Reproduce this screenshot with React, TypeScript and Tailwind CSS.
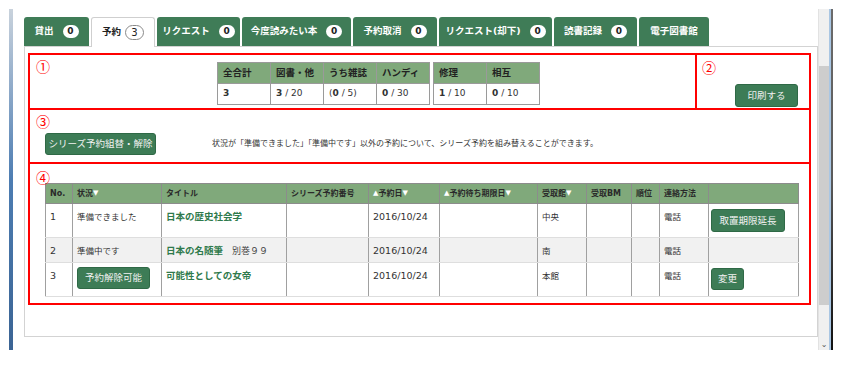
import type { ReactNode } from "react";

type Tab = { label: string; count?: number; w: string; active?: boolean };

const tabs: Tab[] = [
  { label: "貸出", count: 0, w: "w-[65px]" },
  { label: "予約", count: 3, w: "w-[64px]", active: true },
  { label: "リクエスト", count: 0, w: "w-[83px]" },
  { label: "今度読みたい本", count: 0, w: "w-[109px]" },
  { label: "予約取消", count: 0, w: "w-[84px]" },
  { label: "リクエスト(却下)", count: 0, w: "w-[113px]" },
  { label: "読書記録", count: 0, w: "w-[83px]" },
  { label: "電子図書館", w: "w-[70px]" },
];

function GreenButton({ children, className }: { children: ReactNode; className: string }) {
  return (
    <div
      className={`flex items-center justify-center bg-[#3d7c56] border border-[#2f6946] rounded-[3px] text-[#f2f2f2] text-[9.5px] leading-none ${className}`}
    >
      {children}
    </div>
  );
}

function Circled({ children }: { children: ReactNode }) {
  return (
    <div className="font-['Noto_Sans_CJK_JP',sans-serif] text-[#ff0000] text-[14px] leading-[12px] h-[12px]">
      {children}
    </div>
  );
}

function Tri({ up }: { up?: boolean }) {
  return <span className="text-white text-[7px] align-[1px]">{up ? "▲" : "▼"}</span>;
}

// 上段の集計表
function StatTable({ cols }: { cols: { head: string; value: ReactNode }[] }) {
  return (
    <table className="border-collapse table-fixed border border-[#9a9a9a]">
      <tbody>
        <tr className="h-[21px] bg-[#80a97b]">
          {cols.map((c) => (
            <td key={c.head} className="w-[53px] border border-[#9a9a9a] px-[5px] text-[9.5px] font-bold text-[#222]">
              {c.head}
            </td>
          ))}
        </tr>
        <tr className="h-[21px] bg-white">
          {cols.map((c) => (
            <td key={c.head} className="w-[53px] border border-[#9a9a9a] px-[5px] text-[9px] text-[#333]">
              {c.value}
            </td>
          ))}
        </tr>
      </tbody>
    </table>
  );
}

const rows = [
  {
    no: "1",
    status: "準備できました",
    title: "日本の歴史社会学",
    sub: "",
    date: "2016/10/24",
    branch: "中央",
    contact: "電話",
    action: "取置期限延長",
    h: "h-[34px]",
    bg: "bg-white",
  },
  {
    no: "2",
    status: "準備中です",
    title: "日本の名随筆",
    sub: "別巻９９",
    date: "2016/10/24",
    branch: "南",
    contact: "電話",
    action: "",
    h: "h-[25px]",
    bg: "bg-[#f1f1f1]",
  },
  {
    no: "3",
    status: "",
    title: "可能性としての女帝",
    sub: "",
    date: "2016/10/24",
    branch: "本館",
    contact: "電話",
    action: "変更",
    h: "h-[34px]",
    bg: "bg-white",
  },
];

const th = "border border-[#8c8c8c] px-[4px] text-[8px] font-bold text-[#2a2a2a] text-left whitespace-nowrap";
const td = "border-x border-y border-x-[#a0a0a0] border-y-[#dedede] px-[4px] pt-[7px] align-top text-[8.5px] leading-[12px] text-[#333]";

export default function App() {
  return (
    <div className="w-[862px] h-[368px] bg-white overflow-hidden font-['DejaVu_Sans','Noto_Sans_CJK_JP',sans-serif]">
      <div className="flex h-[341px] mt-[9px]">
        <div className="w-[9px]" />
        <div className="w-[4px] bg-gradient-to-b from-[#c9d2dc] via-[#4d7db2] to-[#3b6494]" />
        <div className="w-[11px]" />

        <div className="w-[794px] pt-[8px] flex flex-col">
          {/* タブ */}
          <div className="flex gap-[2px] h-[29px] items-end relative z-10">
            {tabs.map((t) =>
              t.active ? (
                <div
                  key={t.label}
                  className={`${t.w} h-[30px] -mb-[1px] bg-white border border-b-0 border-[#cfcfcf] rounded-t-[3px] flex items-center justify-center gap-[4px]`}
                >
                  <span className="text-[9.5px] font-bold text-[#222]">{t.label}</span>
                  <span className="w-[19px] h-[15px] rounded-full border border-[#8a8a8a] flex items-center justify-center text-[10px] text-[#222]">
                    {t.count}
                  </span>
                </div>
              ) : (
                <div
                  key={t.label}
                  className={`${t.w} h-[29px] bg-[#3f7c57] rounded-t-[3px] flex items-center justify-center gap-[9px]`}
                >
                  <span className="text-[9.5px] font-bold text-white whitespace-nowrap">{t.label}</span>
                  {t.count !== undefined && (
                    <span className="w-[16px] h-[13px] rounded-full bg-white flex items-center justify-center text-[9px] font-bold text-[#222]">
                      {t.count}
                    </span>
                  )}
                </div>
              )
            )}
          </div>

          {/* パネル */}
          <div className="h-[291px] border border-[#d3d3d3] pl-[3px] pr-[6px] pt-[6px]">
            <div className="border-2 border-[#ff0000]">
              {/* ① ② */}
              <div className="flex h-[55px] border-b-2 border-[#ff0000]">
                <div className="flex-1 flex">
                  <div className="w-[187px] pl-[6px] pt-[5px]">
                    <Circled>①</Circled>
                  </div>
                  <div className="flex gap-[3px] mt-[7px] items-start">
                    <StatTable
                      cols={[
                        { head: "全合計", value: <b>3</b> },
                        { head: "図書・他", value: <><b>3</b> / 20</> },
                        { head: "うち雑誌", value: <>(<b>0</b> / 5)</> },
                        { head: "ハンディ", value: <><b>0</b> / 30</> },
                      ]}
                    />
                    <StatTable
                      cols={[
                        { head: "修理", value: <><b>1</b> / 10</> },
                        { head: "相互", value: <><b>0</b> / 10</> },
                      ]}
                    />
                  </div>
                </div>
                <div className="w-[114px] border-l-2 border-[#ff0000] flex flex-col pl-[5px] pt-[6px]">
                  <Circled>②</Circled>
                  <GreenButton className="self-end mr-[11px] mt-[11px] w-[63px] h-[23px]">印刷する</GreenButton>
                </div>
              </div>

              {/* ③ */}
              <div className="h-[54px] border-b-2 border-[#ff0000] pl-[6px] pt-[5px]">
                <Circled>③</Circled>
                <div className="flex items-center mt-[6px] ml-[9px]">
                  <GreenButton className="w-[111px] h-[22px] text-[8.5px]">シリーズ予約組替・解除</GreenButton>
                  <span className="ml-[56px] text-[8px] text-[#333] whitespace-nowrap">
                    状況が「準備できました」「準備中です」以外の予約について、シリーズ予約を組み替えることができます。
                  </span>
                </div>
              </div>

              {/* ④ */}
              <div className="h-[139px] pl-[6px] pt-[7px]">
                <Circled>④</Circled>
                <table className="ml-[9px] w-[753px] table-fixed border-collapse border border-[#9a9a9a]">
                  <colgroup>
                    <col className="w-[27px]" />
                    <col className="w-[89px]" />
                    <col className="w-[125px]" />
                    <col className="w-[82px]" />
                    <col className="w-[71px]" />
                    <col className="w-[98px]" />
                    <col className="w-[49px]" />
                    <col className="w-[45px]" />
                    <col className="w-[28px]" />
                    <col className="w-[49px]" />
                    <col className="w-[90px]" />
                  </colgroup>
                  <thead>
                    <tr className="h-[20px] bg-[#80a97b]">
                      <th className={th}>No.</th>
                      <th className={th}>状況<Tri /></th>
                      <th className={th}>タイトル</th>
                      <th className={th}>シリーズ予約番号</th>
                      <th className={th}><Tri up />予約日<Tri /></th>
                      <th className={th}><Tri up />予約待ち期限日<Tri /></th>
                      <th className={th}>受取館<Tri /></th>
                      <th className={th}>受取BM</th>
                      <th className={th}>順位</th>
                      <th className={th}>連絡方法</th>
                      <th className={th}></th>
                    </tr>
                  </thead>
                  <tbody>
                    {rows.map((r) => (
                      <tr key={r.no} className={`${r.h} ${r.bg}`}>
                        <td className={`${td} text-[9.5px]`}>{r.no}</td>
                        <td className={r.status ? td : `${td} !pt-[4px]`}>
                          {r.status || (
                            <GreenButton className="w-[73px] h-[22px]">予約解除可能</GreenButton>
                          )}
                        </td>
                        <td className={`${td} whitespace-nowrap`}>
                          <span className="text-[9.5px] font-bold text-[#2f7a4c]">{r.title}</span>
                          {r.sub && <span className="ml-[9px] text-[9px] text-[#444]">{r.sub}</span>}
                        </td>
                        <td className={td}></td>
                        <td className={`${td} text-[9.5px]`}>{r.date}</td>
                        <td className={td}></td>
                        <td className={td}>{r.branch}</td>
                        <td className={td}></td>
                        <td className={td}></td>
                        <td className={td}>{r.contact}</td>
                        <td className={`${td} !pt-[5px] !pl-[2px]`}>
                          {r.action && (
                            <GreenButton className={r.action === "変更" ? "w-[33px] h-[22px]" : "w-[74px] h-[23px]"}>
                              {r.action}
                            </GreenButton>
                          )}
                        </td>
                      </tr>
                    ))}
                  </tbody>
                </table>
              </div>
            </div>
          </div>
        </div>

        {/* スクロールバー */}
        <div className="w-[11px] bg-[#f0f0f0] border-l border-[#e2e2e2] flex flex-col">
          <div className="h-[57px]" />
          <div className="h-[239px] bg-[#cdcdcd]" />
          <div className="flex-1 flex items-end justify-center pb-[1px] text-[8px] leading-none text-[#555]">⌄</div>
        </div>
        <div className="w-[2px] bg-[#a9c6e3]" />
        <div className="w-[2px] bg-gradient-to-b from-[#6b6b6b] via-[#5a5a5a] to-[#111]" />
      </div>
    </div>
  );
}
